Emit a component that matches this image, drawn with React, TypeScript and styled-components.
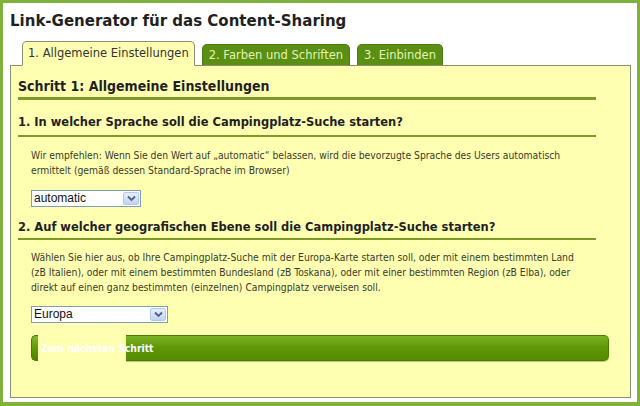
import React from 'react';
import styled, { createGlobalStyle } from 'styled-components';

const GlobalStyle = createGlobalStyle`
  * {
    box-sizing: border-box;
  }
  body {
    margin: 0;
    background: #ffffff;
  }
`;

const Frame = styled.div`
  width: 640px;
  height: 406px;
  border: 3px solid #80b13c;
  border-bottom-width: 4px;
  background: #ffffff;
  display: flex;
  flex-direction: column;
  padding: 8px 6px 4px 7px;
  overflow: hidden;
`;

const Title = styled.h1`
  margin: 0;
  font-family: 'DejaVu Sans', Verdana, sans-serif;
  font-weight: bold;
  font-size: 15px;
  line-height: 20px;
  color: #1f1f1f;
`;

const TabRow = styled.div`
  display: flex;
  align-items: flex-end;
  gap: 7px;
  margin: 10px 0 0 12px;
  position: relative;
  z-index: 1;
`;

const Tab = styled.div<{ $active?: boolean }>`
  font-family: 'DejaVu Sans', Verdana, sans-serif;
  font-size: 11.5px;
  line-height: 14px;
  padding: ${p => (p.$active ? '4px 5px 5px 5px' : '3px 6px 3px 6px')};
  border-radius: 5px 5px 0 0;
  border: 1px solid ${p => (p.$active ? '#8e8e72' : '#4e7c12')};
  border-bottom: ${p => (p.$active ? '1px solid #ffffb2' : 'none')};
  background: ${p => (p.$active ? '#ffffb2' : '#5a8f14')};
  color: ${p => (p.$active ? '#333333' : '#e4f4b4')};
  margin-bottom: ${p => (p.$active ? '-1px' : '0')};
  white-space: nowrap;
`;

const Panel = styled.div`
  flex: 1;
  background: #ffffb2;
  border: 1px solid #8e8e72;
  padding: 11px 34px 0 7px;
  display: flex;
  flex-direction: column;
`;

const StepHeading = styled.h2`
  margin: 0;
  font-family: 'DejaVu Sans Condensed', 'DejaVu Sans', Tahoma, sans-serif;
  font-weight: bold;
  font-size: 14px;
  line-height: 18px;
  color: #1f1f1f;
  padding-bottom: 2px;
  border-bottom: 3px solid #7b9a27;
`;

const Question = styled.h3<{ $top: number; $gap: number }>`
  margin: ${p => p.$top}px 0 0 0;
  font-family: 'DejaVu Sans Condensed', 'DejaVu Sans', Tahoma, sans-serif;
  font-weight: bold;
  font-size: 12.75px;
  line-height: 16px;
  color: #1f1f1f;
  padding-bottom: ${p => p.$gap}px;
  border-bottom: 2px solid #7b9a27;
`;

const Text = styled.p<{ $top: number }>`
  margin: ${p => p.$top}px 0 0 13px;
  font-family: 'DejaVu Sans Condensed', 'DejaVu Sans', Tahoma, sans-serif;
  font-size: 10.27px;
  line-height: 15px;
  color: #3a3a2a;
`;

const Select = styled.div<{ $width: number; $top: number }>`
  margin: ${p => p.$top}px 0 0 13px;
  width: ${p => p.$width}px;
  height: 17px;
  border: 1px solid #7f9db9;
  background: #ffffff;
  display: flex;
  align-items: stretch;
  font-family: 'Liberation Sans', Arial, sans-serif;
  font-size: 12px;
  color: #111111;
`;

const SelectValue = styled.span`
  flex: 1;
  padding-left: 2px;
  line-height: 15px;
`;

const SelectArrow = styled.span`
  width: 16px;
  margin: 1px;
  border: 1px solid #b4c8ec;
  border-radius: 2px;
  background: linear-gradient(#e6eefc, #c3d3f4);
  display: flex;
  align-items: center;
  justify-content: center;
`;

const Button = styled.div`
  margin: 12px -13px 0 13px;
  height: 26px;
  display: grid;
  grid-template-columns: 7px 88px 1fr;
  grid-template-rows: 26px;
`;

const ButtonCap = styled.span`
  grid-area: 1 / 1 / 2 / 2;
  border-radius: 5px 0 0 5px;
  background: linear-gradient(#82b82c, #5e9606 55%, #4f8304);
  border: 1px solid #4a7a06;
  border-right: none;
`;

const ButtonBar = styled.span`
  grid-area: 1 / 3 / 2 / 4;
  border-radius: 0 5px 5px 0;
  background: linear-gradient(#7cb225, #5e9606 50%, #558c04);
  border: 1px solid #4a7a06;
  border-left: none;
  box-shadow: 0 1px 1px rgba(60, 80, 0, 0.35);
`;

const ButtonLabel = styled.span`
  grid-area: 1 / 1 / 2 / 4;
  z-index: 1;
  padding-left: 10px;
  font-family: 'DejaVu Sans Condensed', 'DejaVu Sans', Tahoma, sans-serif;
  font-weight: bold;
  font-size: 10.3px;
  line-height: 26px;
  color: #ffffff;
`;

const Chevron = () => (
  <svg width="9" height="7" viewBox="0 0 9 7">
    <path d="M1 1.5 L4.5 5 L8 1.5" fill="none" stroke="#4d6185" strokeWidth="1.8" />
  </svg>
);

export default function App() {
  return (
    <>
      <GlobalStyle />
      <Frame>
        <Title>Link-Generator für das Content-Sharing</Title>
        <TabRow>
          <Tab $active>1. Allgemeine Einstellungen</Tab>
          <Tab>2. Farben und Schriften</Tab>
          <Tab>3. Einbinden</Tab>
        </TabRow>
        <Panel>
          <StepHeading>Schritt 1: Allgemeine Einstellungen</StepHeading>
          <Question $top={14} $gap={5}>1. In welcher Sprache soll die Campingplatz-Suche starten?</Question>
          <Text $top={11}>
            Wir empfehlen: Wenn Sie den Wert auf „automatic“ belassen, wird die bevorzugte Sprache des Users automatisch
            <br />
            ermittelt (gemäß dessen Standard-Sprache im Browser)
          </Text>
          <Select $width={110} $top={12}>
            <SelectValue>automatic</SelectValue>
            <SelectArrow>
              <Chevron />
            </SelectArrow>
          </Select>
          <Question $top={12} $gap={3}>2. Auf welcher geografischen Ebene soll die Campingplatz-Suche starten?</Question>
          <Text $top={10}>
            Wählen Sie hier aus, ob Ihre Campingplatz-Suche mit der Europa-Karte starten soll, oder mit einem bestimmten Land
            <br />
            (zB Italien), oder mit einem bestimmten Bundesland (zB Toskana), oder mit einer bestimmten Region (zB Elba), oder
            <br />
            direkt auf einen ganz bestimmten (einzelnen) Campingplatz verweisen soll.
          </Text>
          <Select $width={137} $top={11}>
            <SelectValue>Europa</SelectValue>
            <SelectArrow>
              <Chevron />
            </SelectArrow>
          </Select>
          <Button>
            <ButtonCap />
            <ButtonBar />
            <ButtonLabel>Zum nächsten Schritt</ButtonLabel>
          </Button>
        </Panel>
      </Frame>
    </>
  );
}
